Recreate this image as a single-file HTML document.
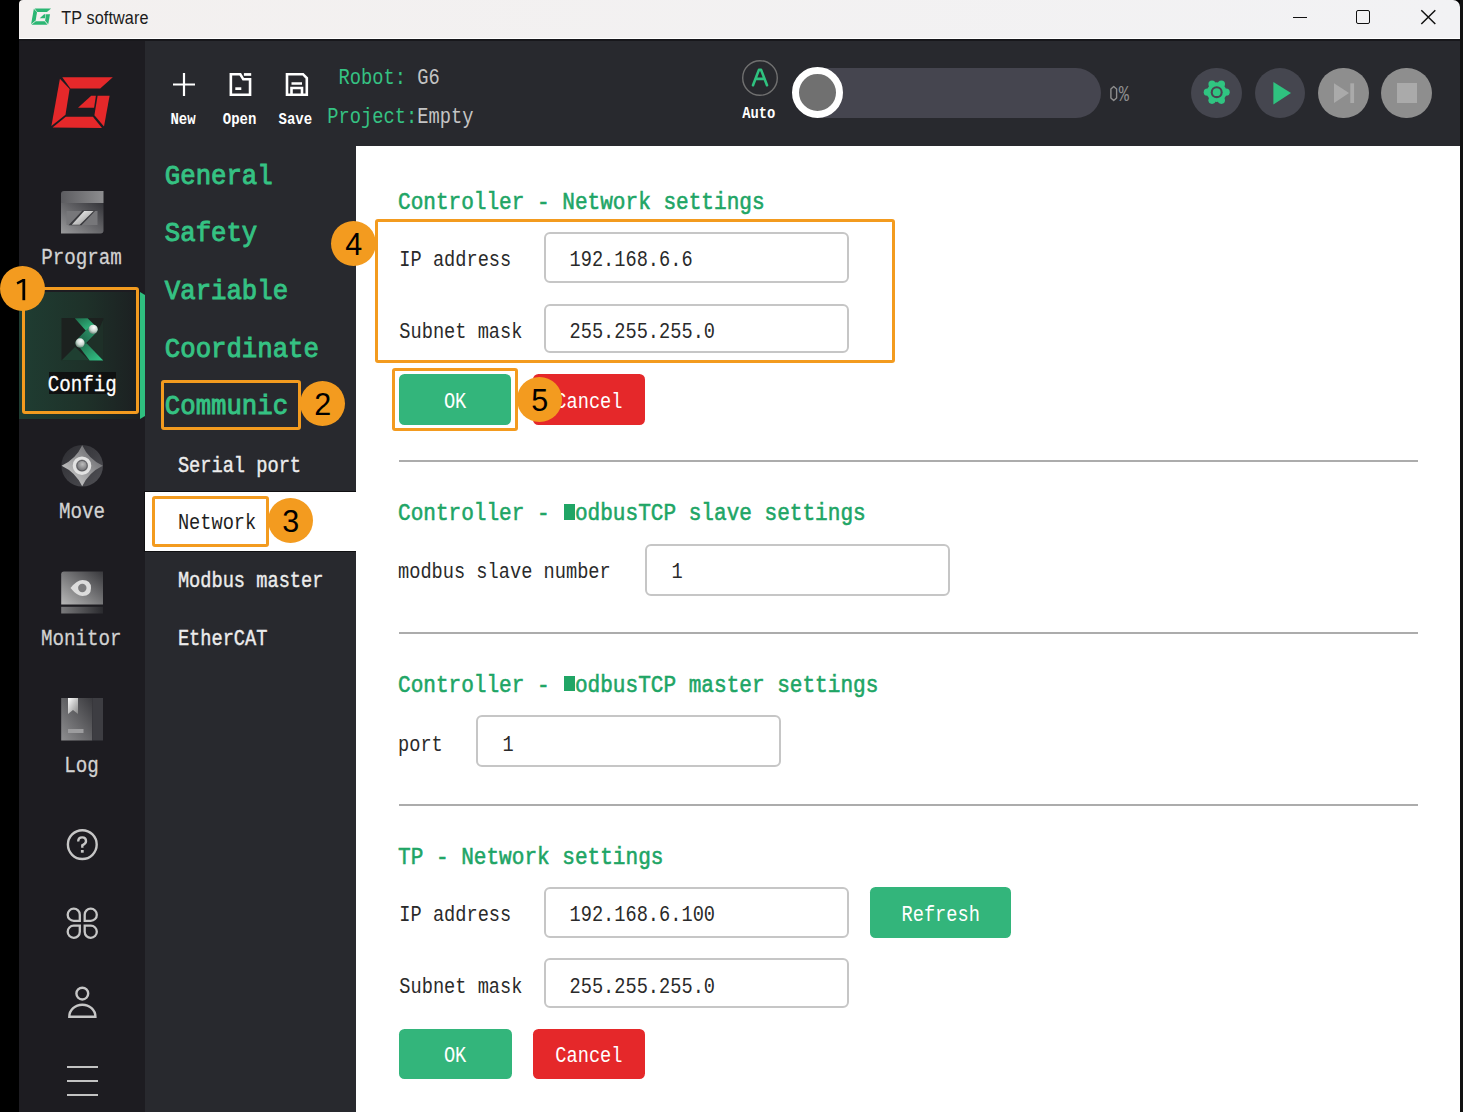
<!DOCTYPE html>
<html><head><meta charset="utf-8"><title>TP software</title>
<style>
html,body{margin:0;padding:0;}
body{width:1463px;height:1112px;overflow:hidden;background:#000;position:relative;font-family:"Liberation Sans",sans-serif;}
body>div,body>svg{position:absolute;}
.t{white-space:pre;}
</style></head><body>
<div style="left:19.00px;top:0.00px;width:1441.00px;height:39.00px;background:linear-gradient(90deg,#f3f0ef,#f2f2f4);border-radius:4px 7px 0 0;"></div>
<div style="left:19.00px;top:38.00px;width:1441.00px;height:1.00px;background:#ffffff;"></div>
<div style="left:19.00px;top:39.00px;width:1441.00px;height:2.00px;background:#17171b;"></div>
<div style="left:19.00px;top:41.00px;width:1441.00px;height:1071.00px;background:#28292e;"></div>
<div style="left:19.00px;top:41.00px;width:126.00px;height:1071.00px;background:#1d1c21;"></div>
<div style="left:356.00px;top:146.00px;width:1104.00px;height:966.00px;background:#ffffff;"></div>
<div style="left:1460.00px;top:0.00px;width:3.00px;height:1112.00px;background:#111;"></div>
<svg style="left:45.00px;top:70.00px" width="75.00" height="65.00" viewBox="0 0 75 65"><g fill="#e5282a"><polygon points="17.25,7.30 67.80,7.30 55.20,18.40 25.40,18.40"/><polygon points="14.90,8.80 24.60,19.00 20.50,44.70 6.40,56.10"/><polygon points="7.60,57.60 20.80,46.80 47.90,46.80 57.00,57.90"/><polygon points="52.60,25.70 64.60,25.70 59.00,56.40 49.40,45.30"/><polygon points="46.20,25.70 50.90,25.70 49.10,37.70 33.00,37.70"/></g></svg>
<svg style="left:29.22px;top:5.82px" width="24.43" height="21.17" viewBox="0 0 75 65"><g fill="#2bb673"><polygon points="17.25,7.30 67.80,7.30 55.20,18.40 25.40,18.40"/><polygon points="14.90,8.80 24.60,19.00 20.50,44.70 6.40,56.10"/><polygon points="7.60,57.60 20.80,46.80 47.90,46.80 57.00,57.90"/><polygon points="52.60,25.70 64.60,25.70 59.00,56.40 49.40,45.30"/><polygon points="46.20,25.70 50.90,25.70 49.10,37.70 33.00,37.70"/></g></svg>
<div class="t" style="left:61.20px;top:9.88px;font-size:16.2px;line-height:16.2px;color:#1b1b1b;font-weight:400;font-family:'Liberation Sans', sans-serif;letter-spacing:0.12px;transform:scaleY(1.100);transform-origin:0 13.72px;">TP software</div>
<div style="left:1292.50px;top:16.80px;width:14.50px;height:1.60px;background:#111;"></div>
<div style="left:1356.20px;top:10.00px;width:14.00px;height:13.80px;border:1.6px solid #111;box-sizing:border-box;border-radius:2px;"></div>
<svg style="left:1420px;top:9px" width="17" height="16" viewBox="0 0 17 16"><path d="M1.3 1.2 L15.3 15 M15.3 1.2 L1.3 15" stroke="#111" stroke-width="1.5"/></svg>
<div style="left:19.00px;top:292.00px;width:121.00px;height:127.00px;background:linear-gradient(90deg,#1f3d32 0%,#1e3129 55%,#1c1f21 100%);"></div>
<svg style="left:139px;top:291px" width="7" height="129" viewBox="0 0 7 129"><polygon points="1,1 6,4 6,125 1,128" fill="#2fbf7f"/></svg>
<svg style="left:61px;top:191px" width="43" height="43" viewBox="0 0 43 43">
<defs>
<linearGradient id="pg1" x1="0" y1="0" x2="1" y2="0"><stop offset="0" stop-color="#5c5c60"/><stop offset="1" stop-color="#8d8d8f"/></linearGradient>
<linearGradient id="pg2" x1="0" y1="1" x2="1" y2="0"><stop offset="0" stop-color="#9a9a9c"/><stop offset="1" stop-color="#333338"/></linearGradient>
<linearGradient id="pg3" x1="0" y1="0" x2="1" y2="1"><stop offset="0" stop-color="#ffffff"/><stop offset="1" stop-color="#8a8a8a"/></linearGradient>
</defs>
<path d="M3 0 H42.5 V12 H0 V3 Q0 0 3 0Z" fill="url(#pg1)"/>
<path d="M0 12 H42.5 V39.5 Q42.5 42.5 39.5 42.5 H0Z" fill="url(#pg2)"/>
<rect x="5.5" y="20" width="31" height="14" fill="#77777a"/>
<polygon points="21.5,19.5 34.5,19.5 20.5,34.3 7.5,34.3" fill="#3a3a3e"/>
<polygon points="23.2,20 32.6,20 18.7,33.8 10.8,33.8" fill="url(#pg3)"/>
</svg>
<svg style="left:55px;top:310px" width="55" height="55" viewBox="0 0 55 55">
<defs>
<linearGradient id="cg1" x1="0" y1="0" x2="1" y2="1"><stop offset="0" stop-color="#1f6a4a"/><stop offset="1" stop-color="#33c98a"/></linearGradient>
<linearGradient id="cg2" x1="1" y1="0" x2="0" y2="1"><stop offset="0" stop-color="#2a9468"/><stop offset="1" stop-color="#1f6248"/></linearGradient>
<radialGradient id="cb" cx="0.6" cy="0.3" r="0.7"><stop offset="0" stop-color="#ffffff"/><stop offset="0.6" stop-color="#c9d6cf"/><stop offset="1" stop-color="#6f8a7c"/></radialGradient>
</defs>
<rect x="6.5" y="8" width="42" height="42.5" fill="#1c211f"/>
<polygon points="6.5,50.5 20,37 34.6,50.5" fill="#1f3f31"/>
<polygon points="48.5,9 48.5,50.5 32,33.5 44,19" fill="#1e3028"/>
<polygon points="19.8,8.2 32.6,8.2 40,15.5 30.7,20.5" fill="url(#cg1)"/>
<line x1="38.1" y1="19.3" x2="25" y2="32.9" stroke="url(#cg2)" stroke-width="9" stroke-linecap="round"/>
<polygon points="23.2,35.6 31.6,33.2 48.3,50.5 34.6,50.5" fill="url(#cg1)"/>
<circle cx="38.1" cy="19.3" r="4.6" fill="url(#cb)"/>
<circle cx="25" cy="32.9" r="4.6" fill="url(#cb)"/>
</svg>
<svg style="left:55px;top:440px" width="55" height="55" viewBox="0 0 55 55">
<defs>
<linearGradient id="mv1" x1="0" y1="0" x2="1" y2="1"><stop offset="0" stop-color="#2c2c31"/><stop offset="1" stop-color="#505055"/></linearGradient>
<linearGradient id="mv2" x1="1" y1="0" x2="0" y2="1"><stop offset="0" stop-color="#55555a"/><stop offset="0.5" stop-color="#9a9a9c"/><stop offset="1" stop-color="#dcdcdc"/></linearGradient>
<radialGradient id="mv3" cx="0.55" cy="0.35" r="0.7"><stop offset="0" stop-color="#bdbdbd"/><stop offset="1" stop-color="#6e6e72"/></radialGradient>
</defs>
<circle cx="27.2" cy="25.7" r="20.8" fill="url(#mv1)"/>
<path d="M27.2 5.2 Q33.5 19 47.8 25.7 Q33.5 32.5 27.2 46.3 Q21 32.5 6.6 25.7 Q21 19 27.2 5.2Z" fill="url(#mv2)"/>
<circle cx="27" cy="25.7" r="7.7" fill="none" stroke="#e2e2e2" stroke-width="3.2"/>
<circle cx="27" cy="25.7" r="5.6" fill="#5a5a5e"/>
<circle cx="27" cy="25.7" r="4.8" fill="url(#mv3)"/>
</svg>
<svg style="left:55px;top:565px" width="55" height="55" viewBox="0 0 55 55">
<defs>
<linearGradient id="mn1" x1="0" y1="1" x2="1" y2="0"><stop offset="0" stop-color="#b8b8b8"/><stop offset="1" stop-color="#38383c"/></linearGradient>
<linearGradient id="mn2" x1="0" y1="0" x2="1" y2="0"><stop offset="0" stop-color="#7a7a7c"/><stop offset="1" stop-color="#2a2a2e"/></linearGradient>
</defs>
<path d="M9 6.5 H48 V39.5 H6.2 V9.3 Q6.2 6.5 9 6.5Z" fill="url(#mn1)"/>
<rect x="6.2" y="41.8" width="41.8" height="6.7" fill="url(#mn2)"/>
<path d="M15.5 23 Q22 15 27.5 15 Q36 15 36 23 Q36 31 27.5 31 Q22 31 15.5 23Z" fill="#dcdcdc"/>
<circle cx="27.3" cy="23" r="4.2" fill="#7c7c7e"/>
</svg>
<svg style="left:55px;top:692px" width="55" height="55" viewBox="0 0 55 55">
<defs>
<linearGradient id="lg1" x1="0" y1="1" x2="1" y2="0"><stop offset="0" stop-color="#8e8e90"/><stop offset="1" stop-color="#3a3a3e"/></linearGradient>
<linearGradient id="lg2" x1="0" y1="0" x2="1" y2="1"><stop offset="0" stop-color="#ffffff"/><stop offset="1" stop-color="#888"/></linearGradient>
</defs>
<rect x="6.2" y="6" width="31" height="42.5" fill="url(#lg1)"/>
<rect x="37.2" y="6" width="10.8" height="42.5" fill="#3d3d42"/>
<polygon points="13,6 23,6 23,22 18,18 13,22" fill="url(#lg2)"/>
<rect x="13" y="37" width="15.5" height="4" fill="#9c9c9e"/>
</svg>
<svg style="left:60px;top:822px" width="45" height="45" viewBox="0 0 45 45">
<circle cx="22.3" cy="22.6" r="14.4" fill="none" stroke="#c6c6c6" stroke-width="2.4"/>
<path d="M18.2 19.6 Q18.2 15.4 22.2 15.4 Q26 15.4 26 19.2 Q26 21.5 22.3 23.3 L22.3 25.8" fill="none" stroke="#c6c6c6" stroke-width="2.4"/>
<rect x="20.9" y="28" width="2.8" height="2.7" fill="#c6c6c6"/>
</svg>
<svg style="left:60px;top:901px" width="45" height="45" viewBox="0 0 45 45">
<g fill="none" stroke="#c6c6c6" stroke-width="2.3">
<path d="M19.8 19.8 H13.7 A6 6 0 0 1 7.7 13.7 A6 6 0 0 1 13.7 7.7 A6 6 0 0 1 19.8 13.7Z"/>
<path d="M24.7 19.8 H30.8 A6 6 0 0 0 36.8 13.7 A6 6 0 0 0 30.8 7.7 A6 6 0 0 0 24.7 13.7Z"/>
<path d="M19.8 24.7 H13.7 A6 6 0 0 0 7.7 30.8 A6 6 0 0 0 13.7 36.8 A6 6 0 0 0 19.8 30.8Z"/>
<path d="M24.7 24.7 H30.8 A6 6 0 0 1 36.8 30.8 A6 6 0 0 1 30.8 36.8 A6 6 0 0 1 24.7 30.8Z"/>
</g></svg>
<svg style="left:60px;top:980px" width="45" height="45" viewBox="0 0 45 45">
<g fill="none" stroke="#c6c6c6" stroke-width="2.4">
<circle cx="22.3" cy="13.6" r="5.9"/>
<path d="M9.3 36.7 A13.05 12 0 0 1 35.4 36.7 Z"/>
</g></svg>
<div style="left:66.50px;top:1065.70px;width:31.50px;height:2.30px;background:#c2c2c2;"></div>
<div style="left:66.50px;top:1079.90px;width:31.50px;height:2.30px;background:#c2c2c2;"></div>
<div style="left:66.50px;top:1094.20px;width:31.50px;height:2.30px;background:#c2c2c2;"></div>
<div class="t" style="left:-218.50px;width:600px;text-align:center;top:249.89px;font-size:19.2px;line-height:19.2px;color:#d2d2d2;font-weight:400;font-family:'Liberation Mono', monospace;letter-spacing:0px;-webkit-text-stroke:0.25px #d2d2d2;transform:scaleY(1.170);transform-origin:0 14.71px;">Program</div>
<div style="left:48.60px;top:371.50px;width:67.20px;height:22.70px;background:#0f1111;"></div>
<div class="t" style="left:-217.80px;width:600px;text-align:center;top:377.29px;font-size:19.2px;line-height:19.2px;color:#ffffff;font-weight:400;font-family:'Liberation Mono', monospace;letter-spacing:0px;-webkit-text-stroke:0.25px #ffffff;transform:scaleY(1.170);transform-origin:0 14.71px;">Config</div>
<div class="t" style="left:-217.90px;width:600px;text-align:center;top:503.99px;font-size:19.2px;line-height:19.2px;color:#d2d2d2;font-weight:400;font-family:'Liberation Mono', monospace;letter-spacing:0px;-webkit-text-stroke:0.25px #d2d2d2;transform:scaleY(1.170);transform-origin:0 14.71px;">Move</div>
<div class="t" style="left:-218.80px;width:600px;text-align:center;top:631.39px;font-size:19.2px;line-height:19.2px;color:#d2d2d2;font-weight:400;font-family:'Liberation Mono', monospace;letter-spacing:0px;-webkit-text-stroke:0.25px #d2d2d2;transform:scaleY(1.170);transform-origin:0 14.71px;">Monitor</div>
<div class="t" style="left:-218.60px;width:600px;text-align:center;top:757.79px;font-size:19.2px;line-height:19.2px;color:#d2d2d2;font-weight:400;font-family:'Liberation Mono', monospace;letter-spacing:0px;-webkit-text-stroke:0.25px #d2d2d2;transform:scaleY(1.170);transform-origin:0 14.71px;">Log</div>
<div class="t" style="left:164.80px;top:164.81px;font-size:25.7px;line-height:25.7px;color:#35c283;font-weight:400;font-family:'Liberation Mono', monospace;letter-spacing:0px;-webkit-text-stroke:0.9px #35c283;transform:scaleY(1.110);transform-origin:0 19.69px;">General</div>
<div class="t" style="left:164.80px;top:222.41px;font-size:25.7px;line-height:25.7px;color:#35c283;font-weight:400;font-family:'Liberation Mono', monospace;letter-spacing:0px;-webkit-text-stroke:0.9px #35c283;transform:scaleY(1.110);transform-origin:0 19.69px;">Safety</div>
<div class="t" style="left:164.80px;top:280.01px;font-size:25.7px;line-height:25.7px;color:#35c283;font-weight:400;font-family:'Liberation Mono', monospace;letter-spacing:0px;-webkit-text-stroke:0.9px #35c283;transform:scaleY(1.110);transform-origin:0 19.69px;">Variable</div>
<div class="t" style="left:164.80px;top:337.61px;font-size:25.7px;line-height:25.7px;color:#35c283;font-weight:400;font-family:'Liberation Mono', monospace;letter-spacing:0px;-webkit-text-stroke:0.9px #35c283;transform:scaleY(1.110);transform-origin:0 19.69px;">Coordinate</div>
<div class="t" style="left:164.80px;top:395.21px;font-size:25.7px;line-height:25.7px;color:#35c283;font-weight:400;font-family:'Liberation Mono', monospace;letter-spacing:0px;-webkit-text-stroke:0.9px #35c283;transform:scaleY(1.110);transform-origin:0 19.69px;">Communic</div>
<div style="left:144.00px;top:490.50px;width:212.00px;height:61.50px;background:#101012;"></div>
<div style="left:145.00px;top:492.00px;width:211.00px;height:58.50px;background:#ffffff;"></div>
<div class="t" style="left:177.90px;top:457.90px;font-size:18.67px;line-height:18.67px;color:#ececec;font-weight:400;font-family:'Liberation Mono', monospace;letter-spacing:0px;-webkit-text-stroke:0.35px #ececec;transform:scaleY(1.200);transform-origin:0 14.30px;">Serial port</div>
<div class="t" style="left:177.90px;top:515.30px;font-size:18.67px;line-height:18.67px;color:#1e1e1e;font-weight:400;font-family:'Liberation Mono', monospace;letter-spacing:0px;transform:scaleY(1.200);transform-origin:0 14.30px;">Network</div>
<div class="t" style="left:177.90px;top:573.10px;font-size:18.67px;line-height:18.67px;color:#ececec;font-weight:400;font-family:'Liberation Mono', monospace;letter-spacing:0px;-webkit-text-stroke:0.35px #ececec;transform:scaleY(1.200);transform-origin:0 14.30px;">Modbus master</div>
<div class="t" style="left:177.90px;top:630.50px;font-size:18.67px;line-height:18.67px;color:#ececec;font-weight:400;font-family:'Liberation Mono', monospace;letter-spacing:0px;-webkit-text-stroke:0.35px #ececec;transform:scaleY(1.200);transform-origin:0 14.30px;">EtherCAT</div>
<svg style="left:170px;top:70px" width="150" height="30" viewBox="0 0 150 30">
<g fill="none" stroke="#ffffff" stroke-width="2.6">
<path d="M14 3 V26 M3 14.5 H25" stroke-width="2.2"/>
<path d="M60.85 4.25 H70.3 L73.3 9.3 H80.05 V24.75 H60.85Z"/>
<path d="M117 4.2 H133 L136.8 8 V24.8 H117Z"/>
<path d="M121.5 24.8 V18 H132 V24.8 M121.5 13.5 H132"/>
</g>
<rect x="65.3" y="17.3" width="6" height="2.7" fill="#fff"/>
<rect x="73.9" y="3.1" width="7.3" height="2.7" fill="#fff"/>
</svg>
<div class="t" style="left:-117.00px;width:600px;text-align:center;top:112.97px;font-size:14px;line-height:14px;color:#ffffff;font-weight:700;font-family:'Liberation Mono', monospace;letter-spacing:0px;transform:scaleY(1.236);transform-origin:0 10.73px;">New</div>
<div class="t" style="left:-60.40px;width:600px;text-align:center;top:112.97px;font-size:14px;line-height:14px;color:#ffffff;font-weight:700;font-family:'Liberation Mono', monospace;letter-spacing:0px;transform:scaleY(1.236);transform-origin:0 10.73px;">Open</div>
<div class="t" style="left:-4.70px;width:600px;text-align:center;top:112.97px;font-size:14px;line-height:14px;color:#ffffff;font-weight:700;font-family:'Liberation Mono', monospace;letter-spacing:0px;transform:scaleY(1.236);transform-origin:0 10.73px;">Save</div>
<div class="t" style="left:338.40px;top:70.24px;font-size:18.75px;line-height:18.75px;color:#c4c4c4;font-weight:400;font-family:'Liberation Mono', monospace;letter-spacing:0px;transform:scaleY(1.215);transform-origin:0 14.36px;"><span style="color:#35c283">Robot: </span>G6</div>
<div class="t" style="left:327.30px;top:109.24px;font-size:18.75px;line-height:18.75px;color:#c4c4c4;font-weight:400;font-family:'Liberation Mono', monospace;letter-spacing:0px;transform:scaleY(1.215);transform-origin:0 14.36px;"><span style="color:#35c283">Project:</span>Empty</div>
<svg style="left:740px;top:58px" width="40" height="40" viewBox="0 0 40 40">
<circle cx="20" cy="20" r="17.3" fill="none" stroke="#707070" stroke-width="1.4"/>
<path d="M13 27.2 L18.9 11.9 H21.1 L27 27.2 M15.9 20.9 H24.1" fill="none" stroke="#2fc27f" stroke-width="2.6" stroke-linejoin="round" stroke-linecap="round"/>
</svg>
<div class="t" style="left:458.70px;width:600px;text-align:center;top:108.23px;font-size:13.8px;line-height:13.8px;color:#ffffff;font-weight:700;font-family:'Liberation Mono', monospace;letter-spacing:0px;transform:scaleY(1.250);transform-origin:0 10.57px;">Auto</div>
<div style="left:817.00px;top:67.50px;width:284.00px;height:50.70px;background:#45454f;border-radius:0 25px 25px 0;"></div>
<div style="left:791.6px;top:66.8px;width:51px;height:51px;border-radius:50%;background:#707070;box-sizing:border-box;border:7.5px solid #ffffff;"></div>
<div class="t" style="left:1108.50px;top:88.48px;font-size:17px;line-height:17px;color:#8e8e8e;font-weight:400;font-family:'Liberation Mono', monospace;letter-spacing:0px;transform:scaleY(1.350);transform-origin:0 13.02px;"> %</div>
<svg style="left:1108px;top:84px" width="12" height="19" viewBox="0 0 12 19"><path d="M5.7 2.5 L8.6 5 V14 L5.7 16.6 L2.9 14 V5Z" fill="none" stroke="#8e8e8e" stroke-width="1.4" stroke-linejoin="round"/></svg>
<div style="left:1191.40px;top:67.6px;width:50.8px;height:50.8px;border-radius:50%;background:#45464f;"></div>
<div style="left:1254.70px;top:67.6px;width:50.8px;height:50.8px;border-radius:50%;background:#45464f;"></div>
<div style="left:1318.00px;top:67.6px;width:50.8px;height:50.8px;border-radius:50%;background:#8e8e8e;"></div>
<div style="left:1381.20px;top:67.6px;width:50.8px;height:50.8px;border-radius:50%;background:#8e8e8e;"></div>
<svg style="left:1196px;top:72px" width="42" height="42" viewBox="0 0 42 42">
<g fill="#30c481"><circle cx="20.7" cy="20.2" r="9.9"/><circle cx="30.10" cy="20.20" r="3.6"/><circle cx="25.40" cy="28.34" r="3.6"/><circle cx="16.00" cy="28.34" r="3.6"/><circle cx="11.30" cy="20.20" r="3.6"/><circle cx="16.00" cy="12.06" r="3.6"/><circle cx="25.40" cy="12.06" r="3.6"/></g>
<circle cx="20.7" cy="20.2" r="6.0" fill="#4a4250"/>
<circle cx="20.7" cy="20.2" r="3.9" fill="#30c481"/>
</svg>
<svg style="left:1270px;top:80px" width="25" height="26" viewBox="0 0 25 26"><polygon points="3.4,2 21,13 3.4,24.4" fill="#2fc27f"/></svg>
<svg style="left:1330px;top:80px" width="28" height="26" viewBox="0 0 28 26"><polygon points="4,3.3 19,13 4,23" fill="#aaaaaa"/><rect x="20.3" y="3.3" width="3.8" height="19.7" fill="#aaaaaa"/></svg>
<div style="left:1396.80px;top:83.00px;width:20.10px;height:20.00px;background:#aaaaaa;"></div>
<div class="t" style="left:398.00px;top:192.56px;font-size:21.07px;line-height:21.07px;color:#20a565;font-weight:400;font-family:'Liberation Mono', monospace;letter-spacing:0px;-webkit-text-stroke:0.5px #20a565;transform:scaleY(1.153);transform-origin:0 16.14px;">Controller - Network settings</div>
<div class="t" style="left:398.00px;top:503.86px;font-size:21.07px;line-height:21.07px;color:#20a565;font-weight:400;font-family:'Liberation Mono', monospace;letter-spacing:0px;-webkit-text-stroke:0.5px #20a565;transform:scaleY(1.153);transform-origin:0 16.14px;">Controller -  odbusTCP slave settings</div>
<div class="t" style="left:398.00px;top:675.76px;font-size:21.07px;line-height:21.07px;color:#20a565;font-weight:400;font-family:'Liberation Mono', monospace;letter-spacing:0px;-webkit-text-stroke:0.5px #20a565;transform:scaleY(1.153);transform-origin:0 16.14px;">Controller -  odbusTCP master settings</div>
<div class="t" style="left:398.00px;top:848.06px;font-size:21.07px;line-height:21.07px;color:#20a565;font-weight:400;font-family:'Liberation Mono', monospace;letter-spacing:0px;-webkit-text-stroke:0.5px #20a565;transform:scaleY(1.153);transform-origin:0 16.14px;">TP - Network settings</div>
<div style="left:563.80px;top:504.00px;width:10.80px;height:15.50px;background:#20a565;"></div>
<div style="left:563.80px;top:675.90px;width:10.80px;height:15.50px;background:#20a565;"></div>
<div style="left:544.00px;top:232.10px;width:305.30px;height:50.50px;background:#fff;border:2px solid #c6c6c6;border-radius:6px;box-sizing:border-box;"></div>
<div style="left:544.30px;top:304.30px;width:304.70px;height:48.60px;background:#fff;border:2px solid #c6c6c6;border-radius:6px;box-sizing:border-box;"></div>
<div class="t" style="left:399.30px;top:252.15px;font-size:18.66px;line-height:18.66px;color:#2a2a2a;font-weight:400;font-family:'Liberation Mono', monospace;letter-spacing:0px;transform:scaleY(1.220);transform-origin:0 14.30px;">IP address</div>
<div class="t" style="left:399.30px;top:323.85px;font-size:18.66px;line-height:18.66px;color:#2a2a2a;font-weight:400;font-family:'Liberation Mono', monospace;letter-spacing:0px;transform:scaleY(1.220);transform-origin:0 14.30px;">Subnet mask</div>
<div class="t" style="left:569.50px;top:252.15px;font-size:18.66px;line-height:18.66px;color:#2a2a2a;font-weight:400;font-family:'Liberation Mono', monospace;letter-spacing:0px;transform:scaleY(1.220);transform-origin:0 14.30px;">192.168.6.6</div>
<div class="t" style="left:569.50px;top:323.85px;font-size:18.66px;line-height:18.66px;color:#2a2a2a;font-weight:400;font-family:'Liberation Mono', monospace;letter-spacing:0px;transform:scaleY(1.220);transform-origin:0 14.30px;">255.255.255.0</div>
<div style="left:398.80px;top:374.40px;width:112.60px;height:50.60px;background:#33b57b;border-radius:5.5px;"></div>
<div style="left:532.60px;top:374.40px;width:112.60px;height:50.60px;background:#e5282a;border-radius:5.5px;"></div>
<div class="t" style="left:155.10px;width:600px;text-align:center;top:394.35px;font-size:18.66px;line-height:18.66px;color:#ffffff;font-weight:400;font-family:'Liberation Mono', monospace;letter-spacing:0px;transform:scaleY(1.220);transform-origin:0 14.30px;">OK</div>
<div class="t" style="left:288.90px;width:600px;text-align:center;top:394.35px;font-size:18.66px;line-height:18.66px;color:#ffffff;font-weight:400;font-family:'Liberation Mono', monospace;letter-spacing:0px;transform:scaleY(1.220);transform-origin:0 14.30px;">Cancel</div>
<div style="left:399.00px;top:460.00px;width:1019.00px;height:2.00px;background:#acacac;"></div>
<div style="left:399.00px;top:631.90px;width:1019.00px;height:2.00px;background:#acacac;"></div>
<div style="left:399.00px;top:803.50px;width:1019.00px;height:2.00px;background:#acacac;"></div>
<div style="left:645.20px;top:543.60px;width:305.00px;height:52.60px;background:#fff;border:2px solid #c6c6c6;border-radius:6px;box-sizing:border-box;"></div>
<div class="t" style="left:398.00px;top:564.25px;font-size:18.66px;line-height:18.66px;color:#2a2a2a;font-weight:400;font-family:'Liberation Mono', monospace;letter-spacing:0px;transform:scaleY(1.220);transform-origin:0 14.30px;">modbus slave number</div>
<div class="t" style="left:671.60px;top:564.25px;font-size:18.66px;line-height:18.66px;color:#2a2a2a;font-weight:400;font-family:'Liberation Mono', monospace;letter-spacing:0px;transform:scaleY(1.220);transform-origin:0 14.30px;">1</div>
<div style="left:476.40px;top:715.00px;width:304.70px;height:52.40px;background:#fff;border:2px solid #c6c6c6;border-radius:6px;box-sizing:border-box;"></div>
<div class="t" style="left:398.00px;top:736.65px;font-size:18.66px;line-height:18.66px;color:#2a2a2a;font-weight:400;font-family:'Liberation Mono', monospace;letter-spacing:0px;transform:scaleY(1.220);transform-origin:0 14.30px;">port</div>
<div class="t" style="left:502.50px;top:736.65px;font-size:18.66px;line-height:18.66px;color:#2a2a2a;font-weight:400;font-family:'Liberation Mono', monospace;letter-spacing:0px;transform:scaleY(1.220);transform-origin:0 14.30px;">1</div>
<div style="left:544.30px;top:886.70px;width:305.20px;height:50.90px;background:#fff;border:2px solid #c6c6c6;border-radius:6px;box-sizing:border-box;"></div>
<div style="left:544.30px;top:958.20px;width:305.20px;height:49.50px;background:#fff;border:2px solid #c6c6c6;border-radius:6px;box-sizing:border-box;"></div>
<div style="left:870.40px;top:886.70px;width:140.80px;height:50.90px;background:#33b57b;border-radius:5.5px;"></div>
<div class="t" style="left:399.30px;top:907.05px;font-size:18.66px;line-height:18.66px;color:#2a2a2a;font-weight:400;font-family:'Liberation Mono', monospace;letter-spacing:0px;transform:scaleY(1.220);transform-origin:0 14.30px;">IP address</div>
<div class="t" style="left:399.30px;top:978.75px;font-size:18.66px;line-height:18.66px;color:#2a2a2a;font-weight:400;font-family:'Liberation Mono', monospace;letter-spacing:0px;transform:scaleY(1.220);transform-origin:0 14.30px;">Subnet mask</div>
<div class="t" style="left:569.50px;top:907.05px;font-size:18.66px;line-height:18.66px;color:#2a2a2a;font-weight:400;font-family:'Liberation Mono', monospace;letter-spacing:0px;transform:scaleY(1.220);transform-origin:0 14.30px;">192.168.6.100</div>
<div class="t" style="left:569.50px;top:978.75px;font-size:18.66px;line-height:18.66px;color:#2a2a2a;font-weight:400;font-family:'Liberation Mono', monospace;letter-spacing:0px;transform:scaleY(1.220);transform-origin:0 14.30px;">255.255.255.0</div>
<div class="t" style="left:640.70px;width:600px;text-align:center;top:907.05px;font-size:18.66px;line-height:18.66px;color:#ffffff;font-weight:400;font-family:'Liberation Mono', monospace;letter-spacing:0px;transform:scaleY(1.220);transform-origin:0 14.30px;">Refresh</div>
<div style="left:398.70px;top:1029.00px;width:112.90px;height:50.30px;background:#33b57b;border-radius:5.5px;"></div>
<div style="left:532.60px;top:1029.00px;width:112.40px;height:50.30px;background:#e5282a;border-radius:5.5px;"></div>
<div class="t" style="left:155.10px;width:600px;text-align:center;top:1047.85px;font-size:18.66px;line-height:18.66px;color:#ffffff;font-weight:400;font-family:'Liberation Mono', monospace;letter-spacing:0px;transform:scaleY(1.220);transform-origin:0 14.30px;">OK</div>
<div class="t" style="left:288.90px;width:600px;text-align:center;top:1047.85px;font-size:18.66px;line-height:18.66px;color:#ffffff;font-weight:400;font-family:'Liberation Mono', monospace;letter-spacing:0px;transform:scaleY(1.220);transform-origin:0 14.30px;">Cancel</div>
<div style="left:21.70px;top:286.70px;width:117.70px;height:126.90px;border:3px solid #f39b1f;border-radius:3px;box-sizing:border-box;"></div>
<div style="left:161.20px;top:379.70px;width:139.80px;height:50.20px;border:3px solid #f39b1f;border-radius:3px;box-sizing:border-box;"></div>
<div style="left:151.60px;top:496.40px;width:117.60px;height:50.90px;border:3px solid #f39b1f;border-radius:3px;box-sizing:border-box;"></div>
<div style="left:374.80px;top:219.40px;width:520.50px;height:143.60px;border:3px solid #f39b1f;border-radius:3px;box-sizing:border-box;"></div>
<div style="left:392.00px;top:367.80px;width:125.90px;height:63.20px;border:3px solid #f39b1f;border-radius:3px;box-sizing:border-box;"></div>
<div style="left:-0.15px;top:265.75px;width:45.30px;height:45.30px;border-radius:50%;background:#f39b1f;"></div>
<svg style="left:0px;top:270px" width="45" height="40" viewBox="0 270 45 40"><polygon points="22.4,279 25.2,279 25.2,300.2 22.4,300.2" fill="#000"/><polygon points="16.6,282.2 22.9,278.9 23.4,281.6 17.5,284.6" fill="#000"/></svg>
<div style="left:300.30px;top:380.90px;width:45.00px;height:45.00px;border-radius:50%;background:#f39b1f;"></div>
<div class="t" style="left:22.80px;width:600px;text-align:center;top:389.08px;font-size:30.5px;line-height:30.5px;color:#000000;font-weight:400;font-family:'Liberation Sans', sans-serif;letter-spacing:0px;">2</div>
<div style="left:268.35px;top:498.20px;width:44.80px;height:44.80px;border-radius:50%;background:#f39b1f;"></div>
<div class="t" style="left:-9.25px;width:600px;text-align:center;top:506.28px;font-size:30.5px;line-height:30.5px;color:#000000;font-weight:400;font-family:'Liberation Sans', sans-serif;letter-spacing:0px;">3</div>
<div style="left:331.05px;top:220.85px;width:45.30px;height:45.30px;border-radius:50%;background:#f39b1f;"></div>
<div class="t" style="left:53.70px;width:600px;text-align:center;top:229.18px;font-size:30.5px;line-height:30.5px;color:#000000;font-weight:400;font-family:'Liberation Sans', sans-serif;letter-spacing:0px;">4</div>
<div style="left:517.40px;top:376.90px;width:44.80px;height:44.80px;border-radius:50%;background:#f39b1f;"></div>
<div class="t" style="left:239.80px;width:600px;text-align:center;top:384.98px;font-size:30.5px;line-height:30.5px;color:#000000;font-weight:400;font-family:'Liberation Sans', sans-serif;letter-spacing:0px;">5</div>
</body></html>
